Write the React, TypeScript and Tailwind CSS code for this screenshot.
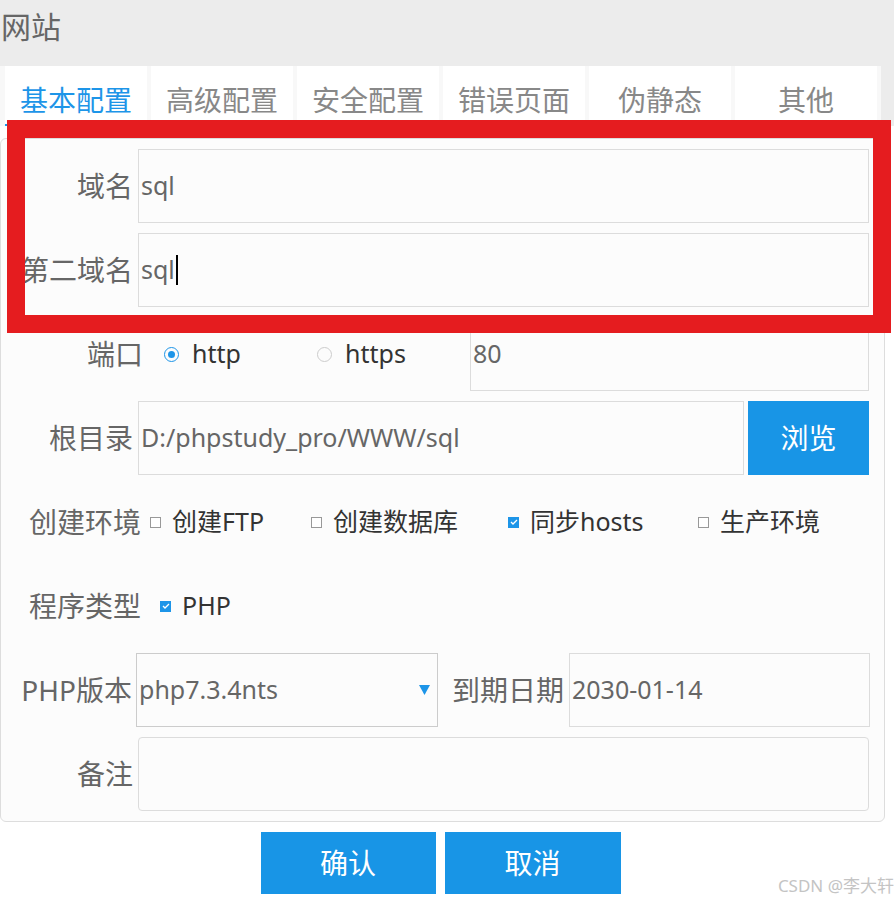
import { ReactNode } from 'react';

const font = { fontFamily: '"Noto Sans", "Noto Sans CJK SC", sans-serif' };

const tabs = ['基本配置', '高级配置', '安全配置', '错误页面', '伪静态', '其他'];

function Label({ width, children }: { width: string; children: ReactNode }) {
  return <div className={`${width} shrink-0 text-right text-[28px] text-[#666] leading-none`}>{children}</div>;
}

function Field({ className, value, cursor }: { className: string; value?: string; cursor?: boolean }) {
  return (
    <div className={`${className} h-full flex items-center border border-[#dcdcdc] bg-[#fcfcfc] pl-[2px] text-[25px] text-[#666]`}>
      {value}
      {cursor && <span className="ml-[1px] inline-block w-[2px] h-[30px] bg-black" />}
    </div>
  );
}

function Radio({ checked, label }: { checked?: boolean; label: string }) {
  return (
    <div className="w-[153px] shrink-0 flex items-center gap-[13px]">
      <span
        className={`w-[15px] h-[15px] rounded-full border flex items-center justify-center ${
          checked ? 'border-[#1d95e8]' : 'border-[#ccc]'
        }`}
      >
        {checked && <span className="w-[7px] h-[7px] rounded-full bg-[#1d95e8]" />}
      </span>
      <span className="text-[25px] text-[#333]">{label}</span>
    </div>
  );
}

function Check({ checked, label, width }: { checked?: boolean; label: string; width: string }) {
  return (
    <div className={`${width} shrink-0 flex items-center gap-[11px]`}>
      {checked ? (
        <span className="w-[11px] h-[11px] bg-[#1d95e8] flex items-center justify-center">
          <svg width="8" height="6" viewBox="0 0 8 6">
            <path d="M1 3 L3 5 L7 1" fill="none" stroke="white" strokeWidth="1.3" />
          </svg>
        </span>
      ) : (
        <span className="w-[11px] h-[11px] border border-[#999] bg-white" />
      )}
      <span className="text-[25px] text-[#333]">{label}</span>
    </div>
  );
}

export default function App() {
  return (
    <div className="relative w-[894px] h-[902px] bg-white overflow-hidden" style={font}>
      {/* title bar */}
      <div className="h-[66px] bg-[#ececec] pl-[1px] pt-[11px] text-[30px] leading-[32px] text-[#666]">网站</div>

      {/* tabs */}
      <div className="flex gap-[4px] pl-[5px] bg-[#f8f8f8]">
        {tabs.map((t, i) => (
          <div
            key={t}
            className={`w-[142px] h-[60px] bg-white pt-[20px] text-center text-[28px] leading-[28px] ${
              i === 0 ? 'text-[#1d95e8] border-b-2 border-[#1d95e8]' : 'text-[#888]'
            }`}
          >
            {t}
          </div>
        ))}
        <div className="flex-1 bg-[#ececec]" />
      </div>

      {/* form panel */}
      <div className="mt-[12px] w-[885px] border border-[#ddd] rounded-[6px] bg-[#fcfcfc] pt-[10px] pb-[10px] flex flex-col gap-[10px]">
        <div className="h-[74px] flex items-center">
          <Label width="w-[132px]">域名</Label>
          <Field className="ml-[5px] w-[731px]" value="sql" />
        </div>
        <div className="h-[74px] flex items-center">
          <Label width="w-[132px]">第二域名</Label>
          <Field className="ml-[5px] w-[731px]" value="sql" cursor />
        </div>
        <div className="h-[74px] flex items-center">
          <Label width="w-[142px]">端口</Label>
          <div className="ml-[21px] flex items-center">
            <Radio checked label="http" />
            <Radio label="https" />
          </div>
          <Field className="w-[399px]" value="80" />
        </div>
        <div className="h-[74px] flex items-center">
          <Label width="w-[132px]">根目录</Label>
          <Field className="ml-[5px] w-[606px]" value="D:/phpstudy_pro/WWW/sql" />
          <button className="ml-[4px] w-[121px] h-full bg-[#1895e6] text-white text-[28px]">浏览</button>
        </div>
        <div className="h-[74px] flex items-center">
          <Label width="w-[140px]">创建环境</Label>
          <div className="ml-[9px] flex items-center">
            <Check label="创建FTP" width="w-[161px]" />
            <Check label="创建数据库" width="w-[197px]" />
            <Check checked label="同步hosts" width="w-[190px]" />
            <Check label="生产环境" width="w-[160px]" />
          </div>
        </div>
        <div className="h-[74px] flex items-center">
          <Label width="w-[140px]">程序类型</Label>
          <div className="ml-[19px] flex items-center">
            <Check checked label="PHP" width="w-[120px]" />
          </div>
        </div>
        <div className="h-[74px] flex items-center">
          <Label width="w-[131px]">PHP版本</Label>
          <div className="ml-[4px] w-[302px] h-full flex items-center justify-between border border-[#ccc] bg-[#fcfcfc] pl-[2px] pr-[7px] text-[25px] text-[#666]">
            <span>php7.3.4nts</span>
            <svg width="11" height="10" viewBox="0 0 11 10">
              <path d="M0 0 H11 L5.5 10 Z" fill="#1d95e8" />
            </svg>
          </div>
          <Label width="w-[126px]">到期日期</Label>
          <Field className="ml-[5px] w-[301px]" value="2030-01-14" />
        </div>
        <div className="h-[74px] flex items-center">
          <Label width="w-[132px]">备注</Label>
          <div className="ml-[5px] w-[731px] h-full border border-[#dcdcdc] rounded-[4px] bg-[#fcfcfc]" />
        </div>
      </div>

      {/* actions */}
      <div className="w-[881px] mt-[10px] flex justify-center gap-[9px]">
        <button className="w-[175px] h-[62px] bg-[#1895e6] text-white text-[28px]">确认</button>
        <button className="w-[176px] h-[62px] bg-[#1895e6] text-white text-[28px]">取消</button>
      </div>

      <div className="absolute right-0 bottom-[4px] text-[17px] text-[#c4c4c4]">CSDN @李大轩</div>

      {/* annotation box */}
      <div className="absolute left-[7px] top-[120px] w-[884px] h-[213px] border-[18px] border-[#e51c1f] pointer-events-none" />
    </div>
  );
}
